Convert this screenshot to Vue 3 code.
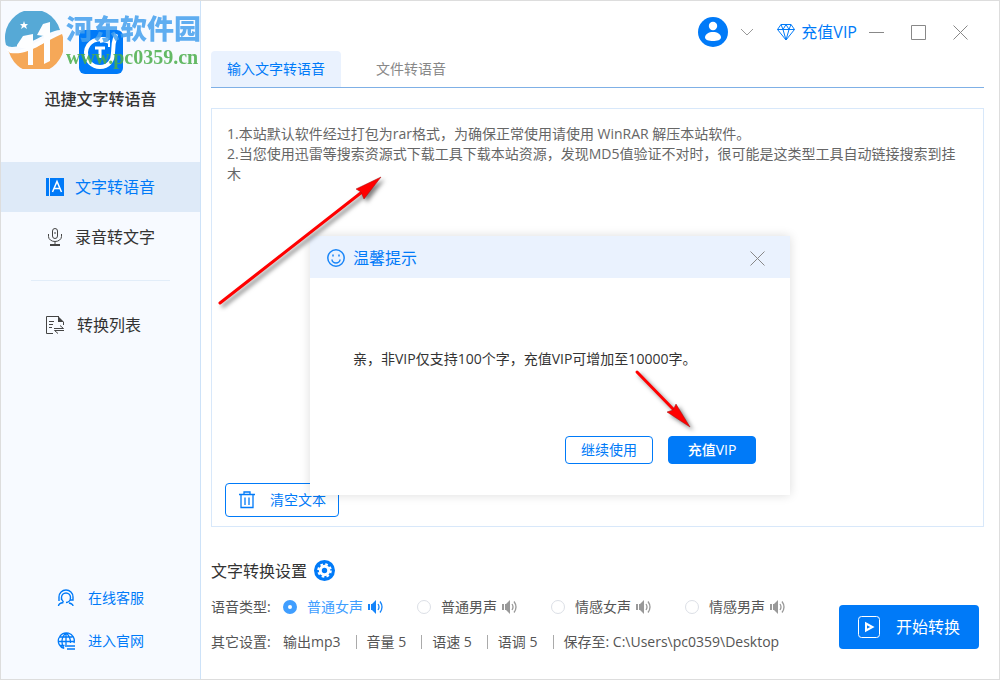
<template>
  <div class="app">
    <aside class="sidebar">
      <div class="brand">
        <svg class="logo" viewBox="0 0 44 44">
          <rect width="44" height="44" rx="6" fill="#007af8" />
          <path d="M29 10C19 7 8 11 7 22C7 31 13 37 21 37C30 37 34 30 34 23C34 15 35 10 37 4" fill="none" stroke="#fff" stroke-width="4" />
          <path d="M30 13C27 11 23 11 21 12M30 10V17" fill="none" stroke="#fff" stroke-width="2" />
          <path d="M16 18h10M21 18v10" stroke="#fff" stroke-width="3" />
        </svg>
        <h1>迅捷文字转语音</h1>
      </div>

      <nav class="menu">
        <button class="menu-item active" type="button">
          <svg width="18" height="18" viewBox="0 0 18 18">
            <path d="M0 0h3v18H0zM4 0h14v18H4z" fill="#007af8" />
            <path d="M6.500 14L11 3.500L15.500 14M8 10.500h6" fill="none" stroke="#fff" stroke-width="1.500" />
          </svg>
          文字转语音
        </button>
        <button class="menu-item" type="button">
          <svg width="18" height="18" viewBox="0 0 18 18" fill="none" stroke="#444">
            <rect x="6.500" y=".5" width="5" height="10" rx="2.500" />
            <path d="M2.500 6v2.500a6.500 5 0 0 0 13 0V6M9 13.500V17" />
            <path d="M4 17h10" stroke-width="2" />
            <path d="M9 4v2" />
          </svg>
          录音转文字
        </button>
        <hr />
        <button class="menu-item wide" type="button">
          <svg width="18" height="18" viewBox="0 0 18 18" fill="none" stroke="#444">
            <path d="M7 17.500H.5V.5H13M17.500 6v3M3 5.500h5M3 8.500h4M3 11.500h3" />
            <path d="M12 0l6 6h-6z" fill="#444" stroke="none" />
            <path d="M8 12.500h9.500L14 9.500M18 14.500H8.500L12 17.500" />
          </svg>
          转换列表
        </button>
      </nav>

      <div class="links">
        <a href="#">
          <svg width="18" height="18" viewBox="0 0 18 18" fill="none" stroke="#007af8" stroke-width="1.400">
            <path d="M2 12V8a7 7 0 0 1 14 0v3h-3" />
            <path d="M4.500 11V8.500a4.500 4.500 0 0 1 9 0c0 3-2 5-4.500 5M4.500 9c0 2 1 3 2 4M1.500 17c0-2 2-3 5-3.500M12 14c2.500.5 4 1 4 3" />
          </svg>
          在线客服
        </a>
        <a href="#">
          <svg width="18" height="18" viewBox="0 0 18 18" fill="none" stroke="#007af8" stroke-width="1.300">
            <path d="M7 16.500A8 8 0 1 1 17 11M1 9.500h16M2.500 5h13M2.500 13.500h5M9 1v12M9 1c-5 4-5 11-2 15.500M9 1c3 2 4.500 6 4.500 10" />
            <path d="M8 14h10M10 17h8" />
          </svg>
          进入官网
        </a>
      </div>

      <div class="watermark">
        <svg width="58" height="58" viewBox="0 0 58 58">
          <path d="M1 34A28 28 0 0 1 55 19C42 20 22 36 7 36Q3 36 1 34Z" fill="#3b9bd0" />
          <path d="M3 39C22 45 40 30 57 23A28 28 0 0 1 6 46Z" fill="#f59a3c" />
          <path d="M12 34L18 25L28 23V54H23V38L12 36ZM32 24L38 13L45 11V50L39 53V25Z" fill="#fff" />
          <path d="M28 33L39 27V31L28 37Z" fill="#fff" />
          <path d="M0 37C20 46 39 25 57 22C40 29 26 45 5 42Z" fill="#fff" />
          <path d="M19 10l1 3h3l-2 2 1 3-3-2-3 2 1-3-2-2h3z" fill="#fff" />
        </svg>
        <div>
          <strong>河东软件园</strong>
          <span>www.pc0359.cn</span>
        </div>
      </div>
    </aside>

    <main>
      <header>
        <div class="tabs">
          <button class="tab active" type="button">输入文字转语音</button>
          <button class="tab" type="button">文件转语音</button>
        </div>
        <div class="controls">
          <button class="account" type="button" aria-label="账号">
            <svg width="30" height="30" viewBox="0 0 30 30">
              <circle cx="15" cy="15" r="15" fill="#007af8" />
              <circle cx="15" cy="9" r="4.200" fill="#fff" />
              <path d="M7 20.500C7 17 11 15 15 15s8 2 8 5.500C23 23 19 24 15 24s-8-1-8-3.500z" fill="#fff" />
            </svg>
            <svg width="14" height="8" viewBox="0 0 14 8" fill="none" stroke="#999">
              <path d="M1 1l6 6 6-6" />
            </svg>
          </button>
          <button class="vip" type="button">
            <svg width="18" height="17" viewBox="0 0 18 17" fill="none" stroke="#007af8">
              <path d="M4 .5h10L17.500 5.500L9 16L.5 5.500zM.5 5.500h17M4 .5l2 5L9 16l3-10.500l2-5M6 5.500L9 .5l3 5" />
            </svg>
            充值VIP
          </button>
          <button type="button" aria-label="最小化">
            <svg width="15" height="15" viewBox="0 0 15 15" stroke="#888"><path d="M0 7.500h15" /></svg>
          </button>
          <button type="button" aria-label="最大化">
            <svg width="15" height="15" viewBox="0 0 15 15" fill="none" stroke="#888"><path d="M.5.5h14v14H.5z" /></svg>
          </button>
          <button type="button" aria-label="关闭">
            <svg width="15" height="15" viewBox="0 0 15 15" stroke="#888"><path d="M.5.5l14 14M14.500.5l-14 14" /></svg>
          </button>
        </div>
      </header>

      <section class="editor">
        <textarea v-model="text" aria-label="文字内容" spellcheck="false"></textarea>
        <button class="clear" type="button" @click="text = ''">
          <svg width="16" height="18" viewBox="0 0 16 18" fill="none" stroke="#007af8" stroke-width="1.300">
            <path d="M0 3.500h16M5 3V1h6v2M2 4v12.500h12V4M6 6.500v7.500M10 6.500v7.500" />
          </svg>
          清空文本
        </button>

        <div v-if="showTip" class="dialog" role="dialog" aria-labelledby="tip-title">
          <div class="dialog-head">
            <svg width="18" height="18" viewBox="0 0 18 18" fill="none" stroke="#1a86f8" stroke-width="1.500">
              <circle cx="9" cy="9" r="8.200" />
              <path d="M5 10.500a4 3.500 0 0 0 8 0M6 5.500v2M12 5.500v2" />
            </svg>
            <h2 id="tip-title">温馨提示</h2>
            <button type="button" aria-label="关闭提示" @click="showTip = false">
              <svg width="15" height="15" viewBox="0 0 15 15" stroke="#888"><path d="M.5.5l14 14M14.500.5l-14 14" /></svg>
            </button>
          </div>
          <p>亲，非VIP仅支持100个字，充值VIP可增加至10000字。</p>
          <div class="dialog-actions">
            <button class="btn" type="button" @click="showTip = false">继续使用</button>
            <button class="btn btn-blue" type="button">充值VIP</button>
          </div>
        </div>

        <svg class="arrows" width="490" height="270" viewBox="0 0 490 270">
          <g fill="none" stroke="#f00" stroke-width="3" stroke-linecap="round">
            <path d="M10 139L152 28" />
            <path d="M427 208L464 246" />
          </g>
          <g fill="#f00" stroke="#a01010" stroke-width=".5">
            <path d="M171 13L146 25L151 28L154 35Z" />
            <path d="M480 263L457 248L463 246L466 240Z" />
          </g>
        </svg>
      </section>

      <footer>
        <div class="settings">
          <div class="row title">
            文字转换设置
            <button type="button" aria-label="设置">
              <svg width="21" height="21" viewBox="0 0 21 21">
                <circle cx="10.500" cy="10.500" r="10.500" fill="#007af8" />
                <circle cx="10.500" cy="10.500" r="4.200" fill="none" stroke="#fff" stroke-width="3" />
                <circle cx="10.500" cy="10.500" r="6.300" fill="none" stroke="#fff" stroke-width="2" stroke-dasharray="2.600 2.348" />
              </svg>
            </button>
          </div>
          <div class="row">
            <span class="name">语音类型:</span>
            <label v-for="item in voices" :key="item" class="voice" :class="{ checked: voice === item }">
              <input type="radio" name="voice" :value="item" v-model="voice" />
              <span>{{ item }}</span>
              <svg width="16" height="14" viewBox="0 0 16 14" fill="none" stroke="currentColor" stroke-width="1.300">
                <path d="M0 4h2v6H0zM3 4h1l4-4v14L4 10H3z" fill="currentColor" stroke="none" />
                <path d="M10 4q2 3 0 6M12 1.500q4 5.500 0 11" />
              </svg>
            </label>
          </div>
          <div class="row">
            <span class="name">其它设置:</span>
            <span v-for="item in options" :key="item" class="option">{{ item }}</span>
          </div>
        </div>
        <button class="start" type="button">
          <svg width="22" height="22" viewBox="0 0 22 22" fill="none" stroke="#fff">
            <rect x=".5" y=".5" width="21" height="21" rx="3" />
            <path d="M8 7.500v7l6.500-3.500z" stroke-width="2" />
          </svg>
          开始转换
        </button>
      </footer>
    </main>
  </div>
</template>

<script setup>
import { ref } from 'vue'

const text = ref(
  '1.本站默认软件经过打包为rar格式，为确保正常使用请使用 WinRAR 解压本站软件。\n2.当您使用迅雷等搜索资源式下载工具下载本站资源，发现MD5值验证不对时，很可能是这类型工具自动链接搜索到挂木'
)
const showTip = ref(true)

const voices = ['普通女声', '普通男声', '情感女声', '情感男声']
const voice = ref('普通女声')

const options = ['输出mp3', '音量 5', '语速 5', '语调 5', '保存至: C:\\Users\\pc0359\\Desktop']
</script>

<style>
body {
  margin: 0;
}
</style>

<style scoped>
.app {
  display: flex;
  box-sizing: border-box;
  min-height: 100vh;
  border: 1px solid #ddd;
  background-color: white;
  color: #333;
  font-family: 'Open Sans', 'Noto Sans CJK SC', sans-serif;
  font-size: 14px;
  line-height: 20px;
}

button {
  padding: 0;
  border: none;
  background: none;
  color: inherit;
  font: inherit;
  cursor: pointer;
}

svg {
  display: block;
  flex: none;
}

.sidebar {
  position: relative;
  display: flex;
  flex-direction: column;
  flex: none;
  width: 199px;
  border-right: 1px solid #cde2f8;
  background-color: #f7faff;
  overflow: hidden;
}

.brand {
  display: flex;
  flex-direction: column;
  align-items: center;
  gap: 15px;
  padding-top: 29px;
}

.logo {
  width: 44px;
  height: 44px;
}

.brand h1 {
  margin: 0;
  font-size: 16px;
  font-weight: 500;
}

.menu {
  margin-top: 53px;
}

.menu-item {
  display: flex;
  align-items: center;
  gap: 11px;
  width: 100%;
  height: 50px;
  padding-left: 45px;
  font-size: 16px;
}

.menu-item.active {
  background-color: #deeaf8;
  color: #007af8;
}

.menu-item.wide {
  gap: 13px;
}

.menu hr {
  height: 1px;
  margin: 18px 30px 19px;
  border: none;
  background-color: #e2edf9;
}

.links {
  display: flex;
  flex-direction: column;
  margin-top: auto;
  padding-bottom: 17px;
}

.links a {
  display: flex;
  align-items: center;
  gap: 13px;
  height: 43px;
  padding-left: 56px;
  color: #007af8;
  text-decoration: none;
}

.watermark {
  position: absolute;
  top: 10px;
  left: 4px;
  display: flex;
  gap: 3px;
  opacity: 0.85;
  pointer-events: none;
}

.watermark strong,
.watermark span {
  display: block;
  white-space: nowrap;
}

.watermark strong {
  color: #45a0ee;
  font-size: 27px;
  font-weight: 900;
  line-height: 36px;
}

.watermark span {
  color: #4bae4b;
  font-family: 'Liberation Serif', serif;
  font-size: 20px;
  font-weight: bold;
  line-height: 20px;
}

main {
  display: flex;
  flex-direction: column;
  flex: 1;
  min-width: 0;
  padding: 0 15px 20px 10px;
}

header {
  display: flex;
  justify-content: space-between;
  height: 86px;
  border-bottom: 1px solid #7fb0e6;
}

.tabs {
  display: flex;
  align-items: flex-end;
}

.tab {
  width: 130px;
  height: 36px;
  border-radius: 4px 4px 0 0;
  color: #888;
}

.tab + .tab {
  margin-left: 5px;
}

.tab.active {
  background-color: #eaf2fe;
  color: #007af8;
}

.controls {
  display: flex;
  align-items: center;
  gap: 27px;
  height: 30px;
  padding: 16px 16px 0 0;
}

.account {
  display: flex;
  align-items: center;
  gap: 12px;
}

.vip {
  display: flex;
  align-items: center;
  gap: 6px;
  margin: 0 -15px 0 -4px;
  color: #007af8;
  font-size: 16px;
}

.editor {
  position: relative;
  display: flex;
  flex-direction: column;
  flex: 1;
  align-items: flex-start;
  margin-top: 20px;
  border: 1px solid #d8e8fa;
}

.editor textarea {
  box-sizing: border-box;
  flex: 1;
  width: 100%;
  padding: 15px 15px 0;
  border: none;
  outline: none;
  background: none;
  color: #666;
  font: inherit;
  resize: none;
}

.clear {
  display: flex;
  align-items: center;
  gap: 15px;
  box-sizing: border-box;
  height: 34px;
  margin: 0 0 9px 13px;
  padding: 0 12px 0 13px;
  border: 1px solid #007af8;
  border-radius: 4px;
  color: #007af8;
}

.dialog {
  position: absolute;
  top: 127px;
  left: 98px;
  width: 480px;
  background-color: white;
  box-shadow: 0 0 10px rgba(0, 0, 0, 0.14);
}

.dialog-head {
  display: flex;
  align-items: center;
  gap: 8px;
  box-sizing: border-box;
  height: 42px;
  padding: 2px 25px 0 17px;
  background-color: #eaf2fe;
}

.dialog-head h2 {
  flex: 1;
  margin: 0;
  color: #007af8;
  font-size: 16px;
  font-weight: 400;
}

.dialog p {
  margin: 0;
  padding: 71px 43px 67px;
}

.dialog-actions {
  display: flex;
  justify-content: flex-end;
  gap: 15px;
  padding: 0 34px 31px 0;
}

.btn {
  box-sizing: border-box;
  width: 88px;
  height: 28px;
  border: 1px solid #007af8;
  border-radius: 4px;
  color: #007af8;
}

.btn-blue {
  background-color: #007af8;
  color: white;
  font-weight: 500;
}

.arrows {
  position: absolute;
  top: 55px;
  left: -2px;
  filter: drop-shadow(3px 3px 2px rgba(0, 0, 0, 0.5));
  pointer-events: none;
}

footer {
  display: flex;
  justify-content: space-between;
  align-items: flex-end;
  margin-top: 26px;
  padding-right: 5px;
}

.row {
  display: flex;
  align-items: center;
  height: 35px;
  color: #555;
  white-space: nowrap;
}

.row.title {
  gap: 7px;
  margin-bottom: 1px;
  color: #333;
  font-size: 16px;
}

.name {
  width: 72px;
}

.voice {
  display: flex;
  align-items: center;
  width: 134px;
}

.voice input {
  box-sizing: border-box;
  width: 14px;
  height: 14px;
  margin: 0 10px 0 0;
  border: 1px solid #dcdfe6;
  border-radius: 50%;
  background-color: white;
  appearance: none;
}

.voice input:checked {
  border: 5px solid #409eff;
}

.voice svg {
  margin-left: 5px;
  color: #999;
}

.voice.checked {
  color: #409eff;
}

.voice.checked svg {
  color: #1484fa;
}

.option + .option {
  display: flex;
  align-items: center;
}

.option + .option::before {
  content: '';
  width: 1px;
  height: 14px;
  margin: 0 10px 0 15px;
  background-color: #aaa;
}

.start {
  display: flex;
  align-items: center;
  justify-content: center;
  gap: 16px;
  width: 140px;
  height: 44px;
  margin-bottom: 10px;
  border-radius: 4px;
  background-color: #007af8;
  color: white;
  font-size: 16px;
}
</style>
